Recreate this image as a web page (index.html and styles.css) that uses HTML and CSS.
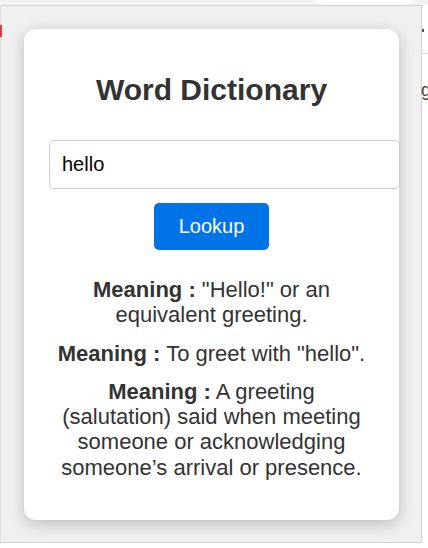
FILE: index.html
```html
<!DOCTYPE html>
<html lang="en">
<head>
<meta charset="utf-8">
<title>Word Dictionary</title>
<link rel="stylesheet" href="styles.css">
</head>
<body>
  <div class="page">
    <div class="topbar"><span class="tab-curve"></span></div>
    <span class="page-red"></span>
    <span class="page-tick"></span>
    <span class="page-line"></span>
    <span class="page-g">g</span>
    <div class="popup">
      <div class="card">
        <h1 class="title">Word Dictionary</h1>
        <input class="word-input" type="text" value="hello">
        <div class="actions">
          <button class="lookup-btn" type="button">Lookup</button>
        </div>
        <div class="results">
          <p class="meaning"><strong>Meaning :</strong> "Hello!" or an equivalent greeting.</p>
          <p class="meaning"><strong>Meaning :</strong> To greet with "hello".</p>
          <p class="meaning"><strong>Meaning :</strong> A greeting (salutation) said when meeting someone or acknowledging someone’s arrival or presence.</p>
        </div>
      </div>
    </div>
  </div>
</body>
</html>
```

FILE: styles.css
```css
* { box-sizing: border-box; }

html, body {
  margin: 0;
  padding: 0;
  background: #ffffff;
  font-family: "Liberation Sans", Arial, sans-serif;
  color: #333333;
}

.page {
  position: relative;
  width: 428px;
  height: 548px;
  overflow: hidden;
}

.topbar {
  position: relative;
  height: 5px;
  background: #f3f3f3;
}

.tab-curve {
  position: absolute;
  left: 312px;
  top: -14px;
  width: 104px;
  height: 19px;
  background: #ffffff;
  border-radius: 0 0 12px 12px;
}

.page-red {
  position: absolute;
  left: 0;
  top: 25px;
  width: 2px;
  height: 12px;
  background: #e53935;
}

.page-tick {
  position: absolute;
  left: 422px;
  top: 29px;
  width: 2px;
  height: 3px;
  background: #555;
}

.page-line {
  position: absolute;
  left: 422px;
  top: 53px;
  width: 6px;
  height: 1px;
  background: #d8d8d8;
}

.page-g {
  position: absolute;
  left: 421px;
  top: 80px;
  font-size: 18px;
  color: #444;
  line-height: 20px;
}

.popup {
  width: 422px;
  height: 538px;
  margin-left: 0;
  border: 1px solid #d2d2d2;
  border-left-color: #e2e2e2;
  background: #f0f0f0;
  padding: 23px 0 0 23px;
}

.card {
  width: 375px;
  background: #ffffff;
  border-radius: 12px;
  box-shadow: 0 4px 16px rgba(0, 0, 0, 0.22);
  padding: 25px 25px 27px 25px;
  text-align: center;
}

.title {
  margin: 19px 0 33px;
  font-size: 30px;
  font-weight: bold;
  color: #333333;
}

.word-input {
  display: block;
  box-sizing: content-box;
  width: 100%;
  height: 23px;
  margin: 0;
  padding: 12px;
  border: 1px solid #cccccc;
  border-radius: 5px;
  font-family: "Liberation Sans", Arial, sans-serif;
  font-size: 20px;
  color: #000000;
  background: #ffffff;
  text-align: left;
  outline: none;
}

.actions {
  display: flex;
  justify-content: center;
  margin-top: 14px;
  margin-bottom: 14px;
}

.lookup-btn {
  padding: 12px 25px;
  border: none;
  border-radius: 5px;
  background: #0074e6;
  color: #ffffff;
  font-family: "Liberation Sans", Arial, sans-serif;
  font-size: 20px;
  line-height: 23px;
}

.results {
  display: flex;
  flex-direction: column;
}

.meaning {
  margin: 13px 5px 0;
  font-size: 22px;
  line-height: 25.3px;
  color: #333333;
}

.meaning:last-child {
  margin-bottom: 13px;
}

.meaning strong {
  font-weight: bold;
}
```
